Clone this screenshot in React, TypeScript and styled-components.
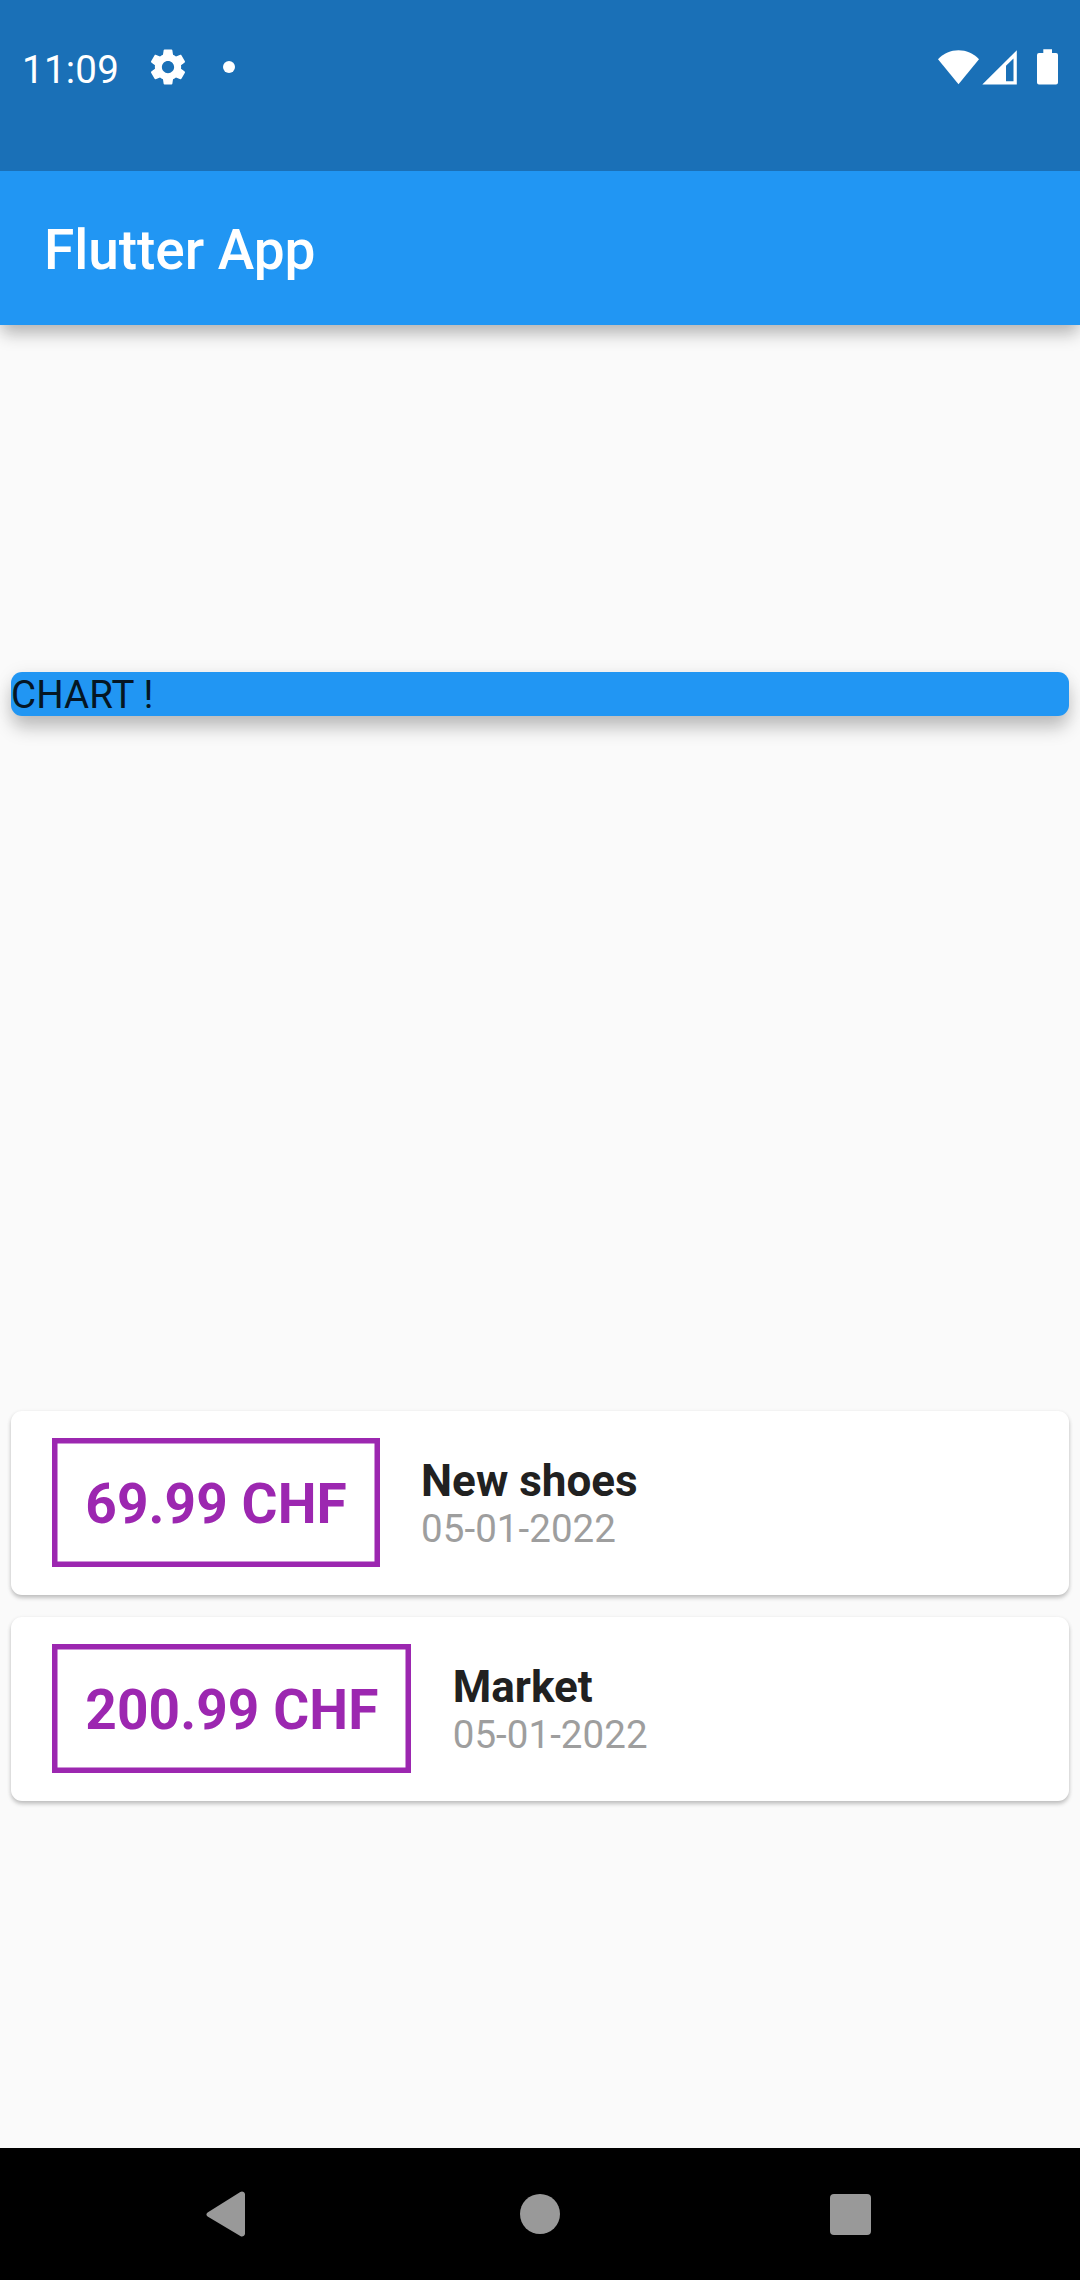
import React from "react";
import styled, { createGlobalStyle } from "styled-components";

const GlobalStyle = createGlobalStyle`
  *, *::before, *::after { box-sizing: border-box; }
  body { margin: 0; background: #fafafa; }
`;

const Screen = styled.div`
  display: flex;
  flex-direction: column;
  width: 1080px;
  height: 2280px;
  overflow: hidden;
  background: #fafafa;
  font-family: Roboto, "Noto Sans", sans-serif;
  color: #212121;
`;

const StatusBar = styled.header`
  z-index: 2;
  display: flex;
  flex: none;
  justify-content: space-between;
  align-items: flex-start;
  height: 171px;
  padding: 46px 20px 0 22px;
  background: #1a70b7;
  color: #fff;
`;

const StatusGroup = styled.div<{ $gap?: number }>`
  display: flex;
  align-items: center;
  height: 42px;
  gap: ${(p) => p.$gap ?? 0}px;
`;

const Clock = styled.span`
  width: 97px;
  padding-top: 5px;
  font-size: 38.5px;
  line-height: 44px;
  letter-spacing: 0.25px;
  white-space: nowrap;
`;

const Dot = styled.span`
  width: 12px;
  height: 12px;
  margin-left: 34px;
  border-radius: 50%;
  background: #fff;
`;

const Glyph = styled.svg`
  display: block;
  flex: none;
`;

const AppBar = styled.div`
  z-index: 1;
  display: flex;
  flex: none;
  align-items: center;
  height: 154px;
  padding: 4px 44px 0;
  background: #2196f3;
  box-shadow: 0 11px 16px -2px rgba(0, 0, 0, 0.24), 0 2px 16px rgba(0, 0, 0, 0.08);
`;

const Title = styled.h1`
  margin: 0;
  color: #fff;
  font-size: 55px;
  font-weight: 500;
  line-height: 64px;
  letter-spacing: -0.05px;
`;

const Body = styled.main`
  display: flex;
  flex: 1;
  flex-direction: column;
  justify-content: space-around;
`;

const Card = styled.section`
  margin: 11px;
  border-radius: 11px;
  background: #fff;
  box-shadow: 0 3px 4px rgba(0, 0, 0, 0.2), 0 1px 4px rgba(0, 0, 0, 0.08);
`;

const ChartCard = styled(Card)`
  height: 44px;
  padding-top: 1px;
  background: #2196f3;
  box-shadow: 0 13px 18px -1px rgba(0, 0, 0, 0.22), 0 2px 18px rgba(0, 0, 0, 0.08);
  color: #051623;
  font-size: 38.5px;
  line-height: 44px;
  letter-spacing: 0.08px;
`;

const TransactionList = styled.div`
  display: flex;
  flex-direction: column;
`;

const TransactionCard = styled(Card)`
  display: flex;
  align-items: center;
  height: 184px;
`;

const Amount = styled.div`
  margin: 27.5px 41.25px;
  padding: 34.5px 33px 31.5px;
  box-shadow: inset 0 0 0 5.5px #9c27b0;
  color: #9c27b0;
  font-size: 55px;
  font-weight: 700;
  line-height: 63px;
  letter-spacing: 0.08px;
  white-space: nowrap;
`;

const Details = styled.div`
  display: flex;
  flex-direction: column;
`;

const Name = styled.span`
  font-size: 44px;
  font-weight: 700;
  line-height: 52px;
`;

const When = styled.span`
  color: #9e9e9e;
  font-size: 38.5px;
  line-height: 44.5px;
  letter-spacing: 0.05px;
`;

const NavBar = styled.nav`
  display: flex;
  flex: none;
  align-items: center;
  justify-content: space-between;
  height: 132px;
  padding: 0 209px 0 206px;
  background: #000;
`;

const HomeButton = styled.span`
  width: 40px;
  height: 40px;
  border-radius: 50%;
  background: #999;
`;

const RecentsButton = styled.span`
  width: 41px;
  height: 41px;
  margin-top: 1px;
  border-radius: 4px;
  background: #999;
`;

const transactions = [
  { id: "t1", amount: "69.99", title: "New shoes", date: "05-01-2022" },
  { id: "t2", amount: "200.99", title: "Market", date: "05-01-2022" },
];

function GearIcon() {
  return (
    <Glyph width="42" height="42" viewBox="0 0 24 24" fill="#fff">
      <path d="M19.43 12.98c.04-.32.07-.64.07-.98s-.03-.66-.07-.98l2.11-1.65c.19-.15.24-.42.12-.64l-2-3.46c-.12-.22-.39-.3-.61-.22l-2.49 1c-.52-.4-1.08-.73-1.69-.98l-.38-2.65C14.46 2.18 14.25 2 14 2h-4c-.25 0-.46.18-.49.42l-.38 2.65c-.61.25-1.17.59-1.69.98l-2.49-1c-.23-.09-.49 0-.61.22l-2 3.46c-.13.22-.07.49.12.64l2.11 1.65c-.04.32-.07.65-.07.98s.03.66.07.98l-2.11 1.65c-.19.15-.24.42-.12.64l2 3.46c.12.22.39.3.61.22l2.49-1c.52.4 1.08.73 1.69.98l.38 2.65c.03.24.24.42.49.42h4c.25 0 .46-.18.49-.42l.38-2.65c.61-.25 1.17-.59 1.69-.98l2.49 1c.23.09.49 0 .61-.22l2-3.46c.12-.22.07-.49-.12-.64l-2.11-1.65zM12 15.5c-1.93 0-3.5-1.57-3.5-3.5s1.57-3.5 3.5-3.5 3.5 1.57 3.5 3.5-1.57 3.5-3.5 3.5z" />
    </Glyph>
  );
}

function WifiIcon() {
  return (
    <Glyph width="44" height="42" viewBox="0 0 44 42" fill="#fff">
      <path d="M2 13.3C7.8 7.2 14.8 4.3 22.5 4.3S37.2 7.2 43 13.3L22.5 38.3Z" />
    </Glyph>
  );
}

function SignalIcon() {
  return (
    <Glyph width="37" height="42" viewBox="0 0 37 42" fill="#fff" fillRule="evenodd">
      <path d="M2.3 38.6L36.8 4.2V38.6ZM26 19.7V35.3H33.5V12.6Z" />
    </Glyph>
  );
}

function BatteryIcon() {
  return (
    <Glyph width="43" height="42" viewBox="0 0 43 42" fill="#fff">
      <path d="M26.3 3.3H35V7H39Q41 7 41 9V36.5Q41 38.5 39 38.5H22Q20 38.5 20 36.5V9Q20 7 22 7H26.3Z" />
    </Glyph>
  );
}

function BackIcon() {
  return (
    <Glyph width="44" height="46" viewBox="0 0 44 46" fill="#999">
      <path d="M1.6 21.4L34.3 1.1Q36 0 38 1.2Q39 2 39 3.5V42.5Q39 44 38 44.8Q36 46 34.3 44.9L1.6 25.6Q-0.8 23.5 1.6 21.4Z" />
    </Glyph>
  );
}

export default function App() {
  return (
    <>
      <GlobalStyle />
      <Screen>
        <StatusBar>
          <StatusGroup $gap={28}>
            <Clock>11:09</Clock>
            <StatusGroup>
              <GearIcon />
              <Dot />
            </StatusGroup>
          </StatusGroup>
          <StatusGroup>
            <WifiIcon />
            <SignalIcon />
            <BatteryIcon />
          </StatusGroup>
        </StatusBar>
        <AppBar>
          <Title>Flutter App</Title>
        </AppBar>
        <Body>
          <ChartCard>CHART !</ChartCard>
          <TransactionList>
            {transactions.map((tx) => (
              <TransactionCard key={tx.id}>
                <Amount>{tx.amount} CHF</Amount>
                <Details>
                  <Name>{tx.title}</Name>
                  <When>{tx.date}</When>
                </Details>
              </TransactionCard>
            ))}
          </TransactionList>
        </Body>
        <NavBar>
          <BackIcon />
          <HomeButton />
          <RecentsButton />
        </NavBar>
      </Screen>
    </>
  );
}
